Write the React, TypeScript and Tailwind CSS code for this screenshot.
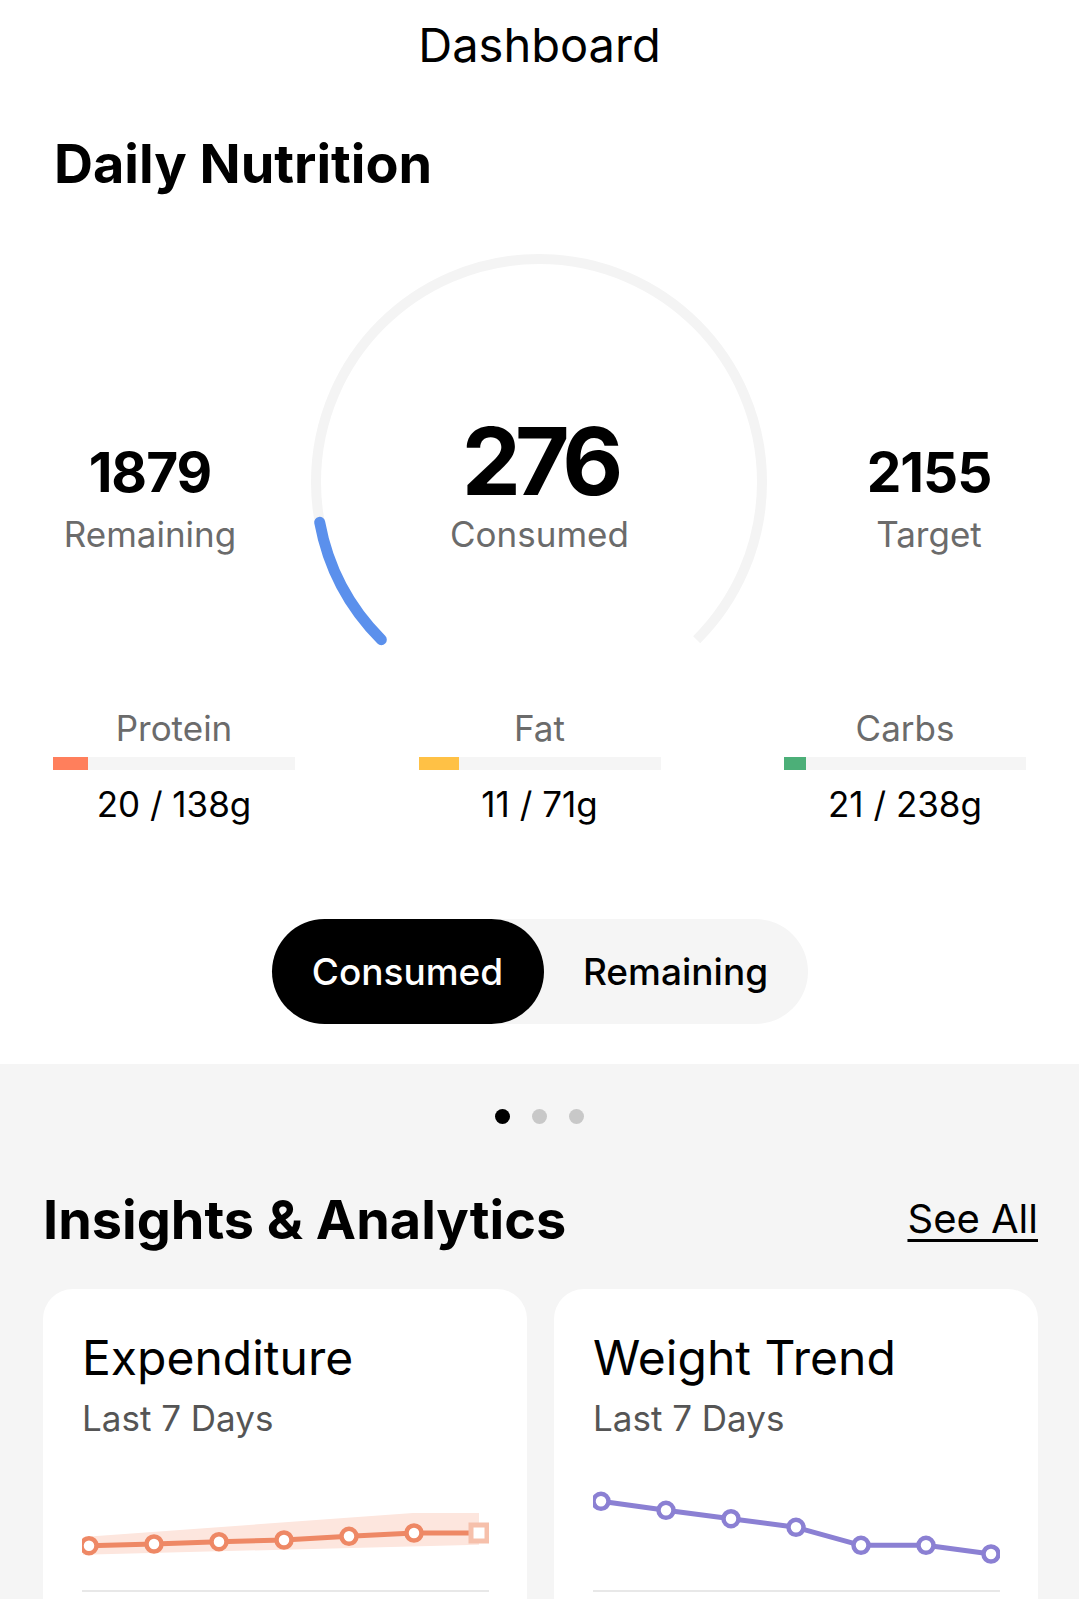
import React from "react";

const FONT = { fontFamily: "Inter, 'Noto Sans', sans-serif" };

function polar(cx: number, cy: number, r: number, deg: number) {
  const a = (deg * Math.PI) / 180;
  return [cx + r * Math.cos(a), cy + r * Math.sin(a)];
}

function arcPath(cx: number, cy: number, r: number, a0: number, a1: number) {
  const [x0, y0] = polar(cx, cy, r, a0);
  const [x1, y1] = polar(cx, cy, r, a1);
  const large = a1 - a0 > 180 ? 1 : 0;
  return `M ${x0} ${y0} A ${r} ${r} 0 ${large} 1 ${x1} ${y1}`;
}

function Gauge() {
  const cx = 230;
  const cy = 233;
  const r = 223;
  const sweep = (276 / 2155) * 270;
  return (
    <svg width="460" height="420" viewBox="0 0 460 420" className="absolute left-[309px] top-0">
      <path d={arcPath(cx, cy, r, 135, 405)} fill="none" stroke="#f4f4f4" strokeWidth="10" />
      <path d={arcPath(cx, cy, r, 135, 135 + sweep)} fill="none" stroke="#5b90ec" strokeWidth="11" strokeLinecap="round" />
    </svg>
  );
}

function Macro({ label, value, color, fill }: { label: string; value: string; color: string; fill: number }) {
  return (
    <div className="flex w-[242px] flex-col items-center">
      <div className="text-[35px] leading-[35px] text-[#6b6b6b]">{label}</div>
      <div className="mt-[11px] flex h-[13px] w-full bg-[#f5f5f5]">
        <div className="h-full" style={{ width: fill, backgroundColor: color }} />
      </div>
      <div className="mt-[17px] text-[35px] leading-[35px] text-black">{value}</div>
    </div>
  );
}

function Chart({
  pts,
  color,
  band,
  lastSquare,
}: {
  pts: number[][];
  color: string;
  band?: boolean;
  lastSquare?: boolean;
}) {
  const linePts = pts.map((p) => p.join(",")).join(" ");
  return (
    <svg width="407" height="117" viewBox="0 0 407 117" className="block">
      {band && <polygon points="1,61 331,37 397,37 397,68.7 1,78.7" fill="#fde6de" />}
      <polyline points={linePts} fill="none" stroke={color} strokeWidth="5" strokeLinejoin="round" />
      {pts.map((p, i) =>
        lastSquare && i === pts.length - 1 ? (
          <rect key={i} x={p[0] - 8} y={p[1] - 8} width="16" height="16" fill="#fff" stroke="#f6c0ab" strokeWidth="5" />
        ) : (
          <circle key={i} cx={p[0]} cy={p[1]} r="7.5" fill="#fff" stroke={color} strokeWidth="4.5" />
        )
      )}
      <rect x="0" y="114" width="407" height="2" fill="#e8e8e8" />
    </svg>
  );
}

function Card({ title, children }: { title: string; children: React.ReactNode }) {
  return (
    <div className="w-[484px] rounded-[30px] bg-white pt-[45px] pb-[40px]">
      <div className="px-[39px]">
        <div className="text-[48px] leading-[48px] text-black">{title}</div>
        <div className="mt-[19px] text-[35px] leading-[35px] text-[#555555]">Last 7 Days</div>
        <div className="mt-[40px]">{children}</div>
      </div>
    </div>
  );
}

export default function App() {
  return (
    <div className="min-h-[1599px] w-[1079px] bg-[#f5f5f5]" style={FONT}>
      <div className="bg-white pb-[40px]">
        <div className="pt-[21px] text-center text-[47px] leading-[47px] text-black">Dashboard</div>
        <div className="px-[54px] pt-[69px] text-[54px] font-bold leading-[54px] text-black">Daily Nutrition</div>

        <div className="relative mt-[58px] h-[400px]">
          <Gauge />
          <div className="relative grid grid-cols-[300px_1fr_300px]">
            <div className="flex flex-col items-center pt-[196px]">
              <div className="text-[55px] font-bold leading-[55px] tracking-[-1px] text-black">1879</div>
              <div className="mt-[17px] text-[35px] leading-[35px] text-[#6b6b6b]">Remaining</div>
            </div>
            <div className="flex flex-col items-center pt-[168px]">
              <div className="text-[94px] font-bold leading-[88px] tracking-[-6px] text-black">276</div>
              <div className="mt-[12px] text-[35px] leading-[35px] text-[#6b6b6b]">Consumed</div>
            </div>
            <div className="flex flex-col items-center pt-[196px]">
              <div className="text-[55px] font-bold leading-[55px] tracking-[-1px] text-black">2155</div>
              <div className="mt-[17px] text-[35px] leading-[35px] text-[#6b6b6b]">Target</div>
            </div>
          </div>
        </div>

        <div className="mt-[62px] flex justify-between px-[53px]">
          <Macro label="Protein" value="20 / 138g" color="#ff7f5c" fill={35} />
          <Macro label="Fat" value="11 / 71g" color="#ffc145" fill={40} />
          <Macro label="Carbs" value="21 / 238g" color="#4caf78" fill={22} />
        </div>

        <div className="mt-[97px] flex justify-center">
          <div className="flex h-[105px] w-[536px] rounded-full bg-[#f5f5f5]">
            <div className="flex w-[272px] items-center justify-center rounded-full bg-black text-[37px] font-medium text-white">
              Consumed
            </div>
            <div className="flex flex-1 items-center justify-center text-[37px] font-medium text-black">Remaining</div>
          </div>
        </div>
      </div>

      <div className="pt-[45px]">
        <div className="flex justify-center gap-[22px]">
          <div className="h-[15px] w-[15px] rounded-full bg-black" />
          <div className="h-[15px] w-[15px] rounded-full bg-[#c8c8c8]" />
          <div className="h-[15px] w-[15px] rounded-full bg-[#c8c8c8]" />
        </div>

        <div className="mt-[69px] flex items-start justify-between pl-[43px] pr-[41px]">
          <div className="text-[54px] font-bold leading-[54px] text-black">Insights &amp; Analytics</div>
          <div className="mt-[6px] text-[40px] leading-[40px] text-black underline decoration-[3px] underline-offset-[6px]">See All</div>
        </div>

        <div className="mt-[42px] flex gap-[27px] pl-[43px]">
          <Card title="Expenditure">
            <Chart
              color="#ee8865"
              band
              lastSquare
              pts={[
                [7, 69.7],
                [72, 68],
                [137, 65.7],
                [202, 64],
                [267, 60.3],
                [332, 57],
                [397, 57],
              ]}
            />
          </Card>
          <Card title="Weight Trend">
            <Chart
              color="#8b80d3"
              pts={[
                [8, 25.3],
                [73, 34.3],
                [138, 42.7],
                [203, 51.3],
                [268, 69.3],
                [333, 69.3],
                [398, 78],
              ]}
            />
          </Card>
        </div>
      </div>
    </div>
  );
}
